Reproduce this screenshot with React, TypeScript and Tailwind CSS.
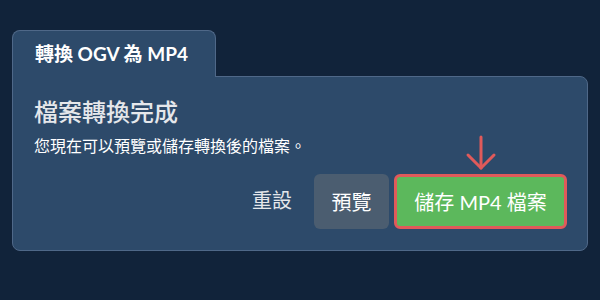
import React from "react";

const FONT = { fontFamily: '"Lato", "Noto Sans CJK TC", sans-serif' };

function DownArrow() {
  return (
    <svg
      width="32"
      height="36"
      viewBox="0 0 32 36"
      className="absolute left-1/2 -translate-x-1/2 -top-[39px]"
      fill="none"
      stroke="#e05a5a"
      strokeWidth="3"
      strokeLinecap="round"
      strokeLinejoin="round"
    >
      <line x1="16" y1="2" x2="16" y2="33" />
      <polyline points="3,20 16,33 29,20" />
    </svg>
  );
}

export default function App() {
  return (
    <div className="w-[600px] h-[300px] bg-[#11233a] pt-[30px] px-[12px]" style={FONT}>
      <div className="flex flex-col">
        <div className="relative z-10 -mb-px w-[204px] h-[47px] bg-[#2d4a6a] border border-b-0 border-[#4f6888] rounded-t-lg flex items-center pl-[22px]">
          <span className="text-white text-[19px] font-bold">
            轉換 OGV 為 MP4
          </span>
        </div>
        <div className="w-[576px] h-[175px] bg-[#2d4a6a] border border-[#4f6888] rounded-b-lg rounded-tr-lg pl-[21px] pr-[20px] pt-[19px]">
          <h2 className="text-[#e5e7eb] text-[24px] font-medium leading-[32px]">
            檔案轉換完成
          </h2>
          <p className="text-white text-[16px] leading-[24px] mt-[6px]">
            您現在可以預覽或儲存轉換後的檔案。
          </p>
          <div className="flex items-center justify-end gap-[5px] mt-[16px]">
            <button className="h-[55px] pl-[20px] pr-[17px] text-[#e5e7eb] text-[20px] -mt-[4px]">重設</button>
            <button className="h-[55px] w-[75px] rounded-md bg-[#4b5d70] text-white text-[20px]">
              預覽
            </button>
            <div className="relative">
              <DownArrow />
              <button className="h-[55px] w-[173px] rounded-md border-[3px] border-[#e05a5a] bg-[#5cb85c] text-white text-[20px]">
                儲存 MP4 檔案
              </button>
            </div>
          </div>
        </div>
      </div>
    </div>
  );
}
